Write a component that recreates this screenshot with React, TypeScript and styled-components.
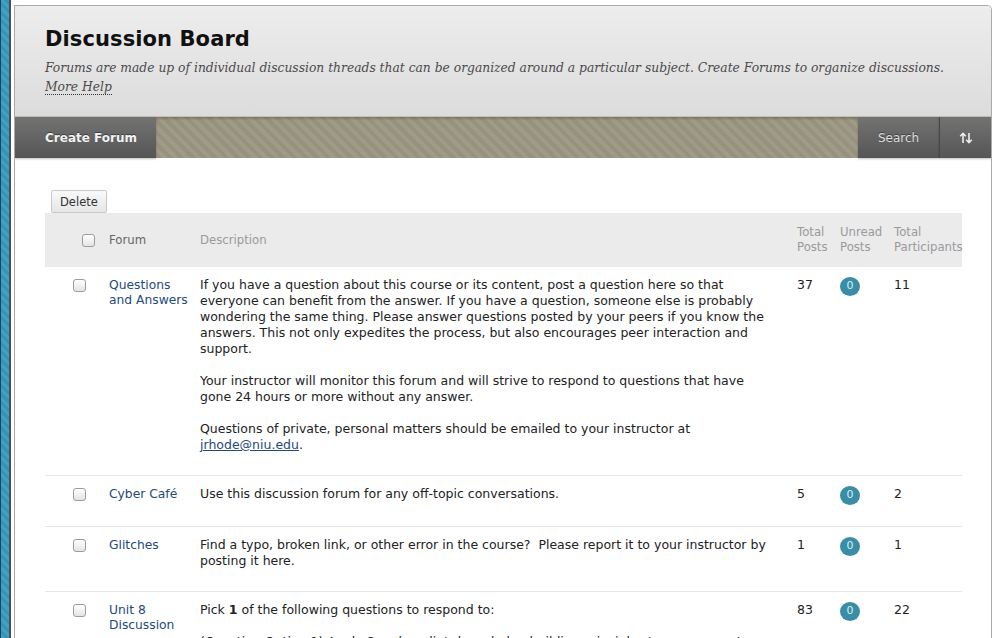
import * as React from "react";
import styled, { createGlobalStyle } from "styled-components";

const GlobalStyle = createGlobalStyle`
  html, body {
    margin: 0;
    padding: 0;
    background: #ffffff;
    overflow: hidden;
  }
  body {
    font-family: "DejaVu Sans", Verdana, sans-serif;
    color: #222;
  }
`;

const Page = styled.div`
  display: flex;
  height: 638px;
  overflow: hidden;
`;

const Rail = styled.div`
  width: 8px;
  flex-shrink: 0;
  border-left: 1px solid #27424c;
  border-right: 2px solid #4a4f52;
  background: repeating-linear-gradient(
    45deg,
    #3aa3c6 0 3px,
    #3295b8 3px 6px
  );
`;

const Panel = styled.div`
  flex: 1;
  margin: 5px 4px 0 3px;
  border: 1px solid #aaaaaa;
  border-bottom: none;
  border-radius: 0 5px 0 0;
  overflow: hidden;
`;

const Header = styled.div`
  padding: 19px 30px 19px 30px;
  background: linear-gradient(#ededed, #dcdcdc);
  border-bottom: 1px solid #c4bfae;
`;

const Title = styled.h1`
  margin: 0 0 6px 0;
  font-family: "DejaVu Sans", sans-serif;
  font-weight: 700;
  font-size: 21px;
  line-height: 28px;
  letter-spacing: 0.1px;
  color: #111;
`;

const Intro = styled.p`
  margin: 0;
  font-family: "DejaVu Serif", Georgia, serif;
  font-style: italic;
  font-size: 12.3px;
  line-height: 19px;
  color: #4a4a4a;
`;

const HelpLink = styled.a`
  color: #4a4a4a;
  text-decoration: none;
  border-bottom: 1px dotted #333;
`;

const Toolbar = styled.div`
  display: flex;
  height: 41px;
  background: repeating-linear-gradient(
    45deg,
    #a09b87 0 4px,
    #979280 4px 8px
  );
  box-shadow: inset 0 2px 2px rgba(0, 0, 0, 0.18);
`;

const ToolButton = styled.div<{ $width: number }>`
  width: ${(p) => p.$width}px;
  flex-shrink: 0;
  box-sizing: border-box;
  display: flex;
  align-items: center;
  justify-content: center;
  background: linear-gradient(#737373, #555555);
  color: #dddddd;
  font-size: 12px;
  text-shadow: 0 -1px 0 rgba(0, 0, 0, 0.4);
  box-shadow: 0 1px 2px rgba(0, 0, 0, 0.25);
`;

const CreateButton = styled(ToolButton)`
  padding-left: 11px;
  color: #f2f2f2;
  font-weight: 700;
`;

const Spacer = styled.div`
  flex: 1;
`;

const SortButton = styled(ToolButton)`
  border-left: 1px solid #474747;
`;

const Content = styled.div`
  padding: 32px 29px 0 30px;
`;

const DeleteButton = styled.button`
  display: block;
  margin-left: 6px;
  height: 23px;
  padding: 0 8px;
  font-family: "DejaVu Sans", sans-serif;
  font-size: 11.5px;
  color: #333;
  background: linear-gradient(#fafafa, #e6e6e6);
  border: 1px solid #c8c8c8;
  border-radius: 2px;
`;

const COLS = "64px 91px 597px 43px 54px 68px";

const HeadRow = styled.div`
  display: grid;
  grid-template-columns: ${COLS};
  align-items: center;
  height: 54px;
  background: #ebebeb;
  font-size: 11.7px;
  line-height: 15px;
  color: #9a9a9a;
`;

const HeadCell = styled.div<{ $dark?: boolean }>`
  color: ${(p) => (p.$dark ? "#666" : "#9a9a9a")};
  white-space: nowrap;
`;

const Check = styled.span<{ $offset: number }>`
  display: block;
  margin-left: ${(p) => p.$offset}px;
  width: 11px;
  height: 11px;
  border: 1px solid #9c9c9c;
  border-radius: 3px;
  background: linear-gradient(#ffffff, #e4e4e4);
  box-shadow: inset 0 1px 0 #fff;
`;

const Row = styled.div<{ $extra?: number }>`
  display: grid;
  grid-template-columns: ${COLS};
  align-items: start;
  padding: 10px 0 ${(p) => 22 - 16 + (p.$extra ?? 0)}px;
  border-bottom: 1px solid #e6e6e6;
  font-size: 12.5px;
  line-height: 16px;
  color: #222;
`;

const CheckCell = styled.div`
  padding-top: 2px;
`;

const ForumLink = styled.a`
  color: #1f4a7c;
  text-decoration: none;
  font-size: 12.3px;
  line-height: 15px;
  padding-top: 1px;
`;

const Desc = styled.div`
  padding-right: 22px;

  p {
    margin: 0 0 16px;
  }
  a {
    color: #1f4a7c;
  }
`;

const Num = styled.div``;

const Badge = styled.span`
  display: inline-flex;
  align-items: center;
  justify-content: center;
  width: 20px;
  height: 19px;
  margin-top: -2px;
  border-radius: 50%;
  background: #3a8da6;
  color: #d8eef4;
  font-size: 11px;
`;

const SortIcon: React.FC = () => (
  <svg width="14" height="12" viewBox="0 0 14 12" fill="none">
    <path d="M4 11V1.5M1.2 4.3L4 1.3l2.8 3" stroke="#eeeeee" strokeWidth="1.6" />
    <path d="M10 1v9.5M7.2 7.7l2.8 3 2.8-3" stroke="#eeeeee" strokeWidth="1.6" />
  </svg>
);

type Forum = {
  title: React.ReactNode;
  body: React.ReactNode;
  total: number;
  participants: number;
  extra?: number;
};

const forums: Forum[] = [
  {
    title: (
      <>
        Questions
        <br />
        and Answers
      </>
    ),
    body: (
      <>
        <p>
          If you have a question about this course or its content, post a
          question here so that everyone can benefit from the answer. If you
          have a question, someone else is probably wondering the same thing.
          Please answer questions posted by your peers if you know the answers.
          This not only expedites the process, but also encourages peer
          interaction and support.
        </p>
        <p>
          Your instructor will monitor this forum and will strive to respond to
          questions that have gone 24 hours or more without any answer.
        </p>
        <p>
          Questions of private, personal matters should be emailed to your
          instructor at <a href="#">jrhode@niu.edu</a>.
        </p>
      </>
    ),
    total: 37,
    participants: 11,
  },
  {
    title: "Cyber Café",
    body: <p>Use this discussion forum for any off-topic conversations.</p>,
    total: 5,
    participants: 2,
    extra: 2,
  },
  {
    title: "Glitches",
    body: (
      <p>
        Find a typo, broken link, or other error in the course?{"\u00a0 "}Please
        report it to your instructor by posting it here.
      </p>
    ),
    total: 1,
    participants: 1,
  },
  {
    title: (
      <>
        Unit 8
        <br />
        Discussion
      </>
    ),
    body: (
      <>
        <p>
          Pick <b>1</b> of the following questions to respond to:
        </p>
        <p>
          (Question Option 1) Apply Scardamalia's knowledge building principles
          to your current work setting and describe how you would use them.
        </p>
      </>
    ),
    total: 83,
    participants: 22,
  },
];

export default function App() {
  return (
    <>
      <GlobalStyle />
      <Page>
        <Rail />
        <Panel>
          <Header>
            <Title>Discussion Board</Title>
            <Intro>
              Forums are made up of individual discussion threads that can be
              organized around a particular subject. Create Forums to organize
              discussions.
              <br />
              <HelpLink href="#">More Help</HelpLink>
            </Intro>
          </Header>
          <Toolbar>
            <CreateButton $width={141}>Create Forum</CreateButton>
            <Spacer />
            <ToolButton $width={81}>Search</ToolButton>
            <SortButton $width={52}>
              <SortIcon />
            </SortButton>
          </Toolbar>
          <Content>
            <DeleteButton>Delete</DeleteButton>
            <HeadRow>
              <Check $offset={37} />
              <HeadCell $dark>Forum</HeadCell>
              <HeadCell>Description</HeadCell>
              <HeadCell>
                Total
                <br />
                Posts
              </HeadCell>
              <HeadCell>
                Unread
                <br />
                Posts
              </HeadCell>
              <HeadCell>
                Total
                <br />
                Participants
              </HeadCell>
            </HeadRow>
            {forums.map((f, i) => (
              <Row key={i} $extra={f.extra}>
                <CheckCell>
                  <Check $offset={28} />
                </CheckCell>
                <ForumLink href="#">{f.title}</ForumLink>
                <Desc>{f.body}</Desc>
                <Num>{f.total}</Num>
                <Num>
                  <Badge>0</Badge>
                </Num>
                <Num>{f.participants}</Num>
              </Row>
            ))}
          </Content>
        </Panel>
      </Page>
    </>
  );
}
